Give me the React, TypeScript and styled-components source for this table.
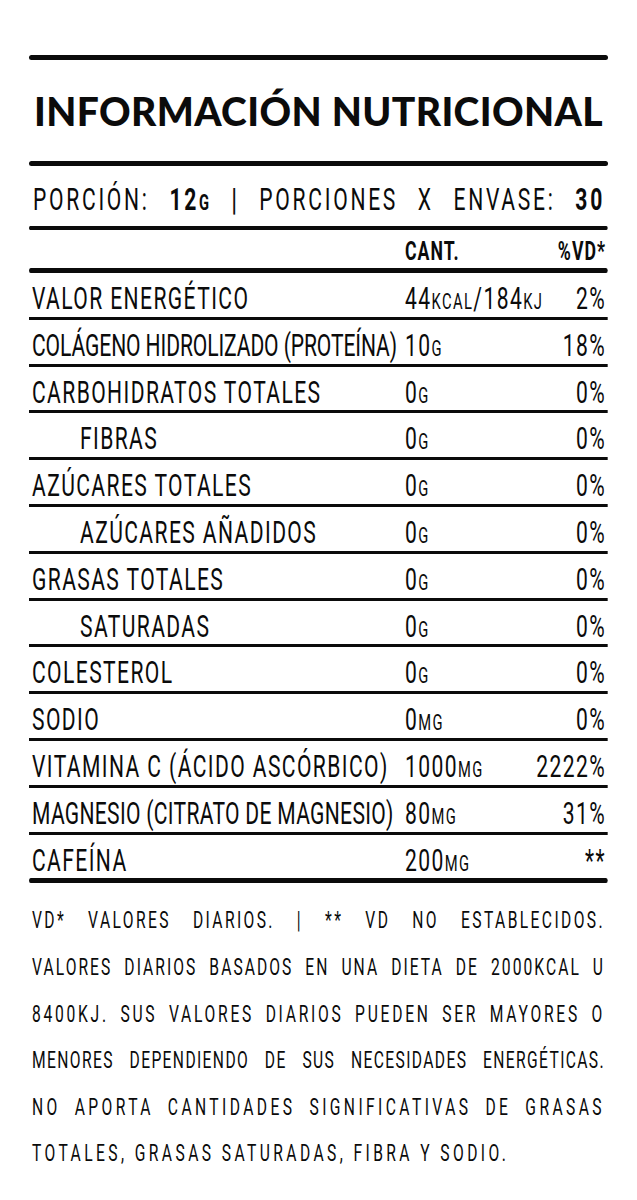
import styled, { createGlobalStyle } from "styled-components";

// the label type is a tall condensed face; we squeeze Roboto horizontally
const K = 0.68;
const u = (n: number) => `${(n / K).toFixed(2)}px`;

const GlobalStyle = createGlobalStyle`
  html, body {
    margin: 0;
    padding: 0;
    background: #ffffff;
  }
  body {
    overflow-x: hidden;
  }
`;

const Label = styled.div`
  width: 579px;
  margin-left: 29px;
  padding-top: 55px;
  padding-bottom: 40px;
  color: #0b0b0b;
`;

const Rule = styled.div<{ $h?: number }>`
  height: ${(p) => p.$h ?? 5}px;
  background: #0b0b0b;
  border-radius: 3px;
`;

const Title = styled.h1`
  margin: 0;
  height: 101px;
  box-sizing: border-box;
  padding-top: 2px;
  font-family: Lato, "Open Sans", sans-serif;
  font-weight: 900;
  font-size: 39px;
  line-height: 99px;
  letter-spacing: 0.4px;
  text-align: center;
  white-space: nowrap;
`;

const Condensed = styled.div`
  width: ${u(579)};
  transform: scaleX(${K});
  transform-origin: left top;
  font-family: Roboto, "Liberation Sans", sans-serif;
`;

const Serving = styled.div`
  height: 60px;
  box-sizing: border-box;
  padding: 18px ${u(3)} 0 ${u(4)};
  font-size: 31px;
  line-height: 31px;
  font-weight: 400;
  letter-spacing: 4px;
  text-align: justify;
  text-align-last: justify;
`;

const Strong = styled.b`
  font-weight: 700;
`;

const Unit = styled.span`
  font-size: 0.7em;
`;

const Grid = styled.div`
  display: grid;
  grid-template-columns: ${u(373)} auto 1fr;
  align-items: start;
  box-sizing: border-box;
  padding-left: ${u(3)};
  padding-right: ${u(3)};
`;

const HeadRow = styled(Grid)`
  height: 38px;
  padding-top: 8px;
  font-size: 26px;
  line-height: 26px;
  font-weight: 700;
  letter-spacing: ${u(1)};
`;

const Row = styled(Grid)`
  height: 43.8px;
  padding-top: 10px;
  font-size: 31px;
  line-height: 31px;
  font-weight: 400;
  letter-spacing: ${u(1.4)};

  & + & {
    height: 46.8px;
    border-top: 3px solid #0b0b0b;
  }
`;

const Name = styled.span<{ $sub?: boolean; $track?: number }>`
  padding-left: ${(p) => (p.$sub ? u(48) : "0")};
  letter-spacing: ${(p) => (p.$track === undefined ? "inherit" : u(p.$track))};
  white-space: nowrap;
`;

const Amount = styled.span`
  white-space: nowrap;
`;

const Pct = styled.span`
  justify-self: end;
  white-space: nowrap;
  margin-right: ${u(-1)};
`;

const Footer = styled.div`
  padding: 15px ${u(3)} 0;
  font-size: 23px;
  line-height: 46.6px;
  font-weight: 400;
`;

const Line = styled.div<{ $track: number; $last?: boolean }>`
  letter-spacing: ${(p) => p.$track}px;
  text-align: justify;
  text-align-last: ${(p) => (p.$last ? "left" : "justify")};
`;

type Part = { v: string; unit?: string };
type Nutrient = { name: string; sub?: boolean; track?: number; amount: Part[]; pct: string };

const nutrients: Nutrient[] = [
  { name: "VALOR ENERGÉTICO", amount: [{ v: "44", unit: "KCAL" }, { v: "/184", unit: "KJ" }], pct: "2%" },
  { name: "COLÁGENO HIDROLIZADO (PROTEÍNA)", track: -0.1, amount: [{ v: "10", unit: "G" }], pct: "18%" },
  { name: "CARBOHIDRATOS TOTALES", amount: [{ v: "0", unit: "G" }], pct: "0%" },
  { name: "FIBRAS", sub: true, amount: [{ v: "0", unit: "G" }], pct: "0%" },
  { name: "AZÚCARES TOTALES", amount: [{ v: "0", unit: "G" }], pct: "0%" },
  { name: "AZÚCARES AÑADIDOS", sub: true, amount: [{ v: "0", unit: "G" }], pct: "0%" },
  { name: "GRASAS TOTALES", amount: [{ v: "0", unit: "G" }], pct: "0%" },
  { name: "SATURADAS", sub: true, amount: [{ v: "0", unit: "G" }], pct: "0%" },
  { name: "COLESTEROL", amount: [{ v: "0", unit: "G" }], pct: "0%" },
  { name: "SODIO", amount: [{ v: "0", unit: "MG" }], pct: "0%" },
  { name: "VITAMINA C (ÁCIDO ASCÓRBICO)", amount: [{ v: "1000", unit: "MG" }], pct: "2222%" },
  { name: "MAGNESIO (CITRATO DE MAGNESIO)", track: 0.3, amount: [{ v: "80", unit: "MG" }], pct: "31%" },
  { name: "CAFEÍNA", amount: [{ v: "200", unit: "MG" }], pct: "**" },
];

const notes = [
  { text: "VD* VALORES DIARIOS. | ** VD NO ESTABLECIDOS.", track: 3.5 },
  { text: "VALORES DIARIOS BASADOS EN UNA DIETA DE 2000KCAL U", track: 3 },
  { text: "8400KJ. SUS VALORES DIARIOS PUEDEN SER MAYORES O", track: 4 },
  { text: "MENORES DEPENDIENDO DE SUS NECESIDADES ENERGÉTICAS.", track: 2 },
  { text: "NO APORTA CANTIDADES SIGNIFICATIVAS DE GRASAS", track: 5 },
  { text: "TOTALES, GRASAS SATURADAS, FIBRA Y SODIO.", track: 5, last: true },
];

export default function App() {
  return (
    <>
      <GlobalStyle />
      <Label>
        <Rule />
        <Title>INFORMACIÓN NUTRICIONAL</Title>
        <Rule />
        <Condensed>
          <Serving>
            PORCIÓN: <Strong>12<Unit>G</Unit></Strong> <Strong>|</Strong> PORCIONES X ENVASE:{" "}
            <Strong>30</Strong>
          </Serving>
          <Rule $h={4} />
          <HeadRow>
            <span />
            <span>CANT.</span>
            <Pct>%VD*</Pct>
          </HeadRow>
          <Rule />
          {nutrients.map((n) => (
            <Row key={n.name}>
              <Name $sub={n.sub} $track={n.track}>
                {n.name}
              </Name>
              <Amount>
                {n.amount.map((a, i) => (
                  <span key={i}>
                    {a.v}
                    {a.unit && <Unit>{a.unit}</Unit>}
                  </span>
                ))}
              </Amount>
              <Pct>{n.pct}</Pct>
            </Row>
          ))}
          <Rule />
          <Footer>
            {notes.map((l) => (
              <Line key={l.text} $track={l.track} $last={l.last}>
                {l.text}
              </Line>
            ))}
          </Footer>
        </Condensed>
      </Label>
    </>
  );
}
